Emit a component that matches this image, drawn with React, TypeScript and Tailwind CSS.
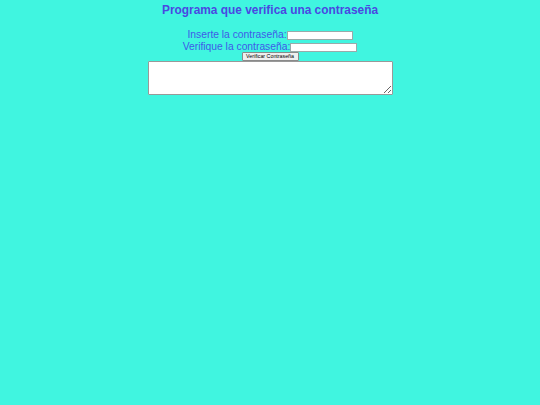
export default function App() {
  return (
    <div className="min-h-screen w-full bg-[#40f5e0] flex flex-col items-center font-['Liberation_Sans',Arial,sans-serif]">
      <h3 className="mt-[3px] text-[11.9px] leading-[15px] font-bold text-[#4a48e2]">
        Programa que verifica una contraseña
      </h3>
      <div className="mt-[11px] flex flex-col items-center text-[10.3px] leading-[11.5px] text-[#3f5ae8]">
        <div className="flex items-end">
          <span>Inserte la contraseña:</span>
          <input type="password" className="w-[66px] h-[9px] mb-[0.5px] bg-white border border-[#9aa] outline-none" />
        </div>
        <div className="flex items-end">
          <span>Verifique la contraseña:</span>
          <input type="password" className="w-[67px] h-[9px] mb-[0.5px] bg-white border border-[#9aa] outline-none" />
        </div>
      </div>
      <button className="w-[57px] h-[9px] flex items-center justify-center bg-[#efefef] border border-[#8a8a8a] rounded-[1px] text-[5.3px] leading-none text-black">
        Verificar Contraseña
      </button>
      <textarea className="w-[245px] h-[34px] bg-white border border-[#999] rounded-[1px] outline-none resize-y" />
    </div>
  );
}
